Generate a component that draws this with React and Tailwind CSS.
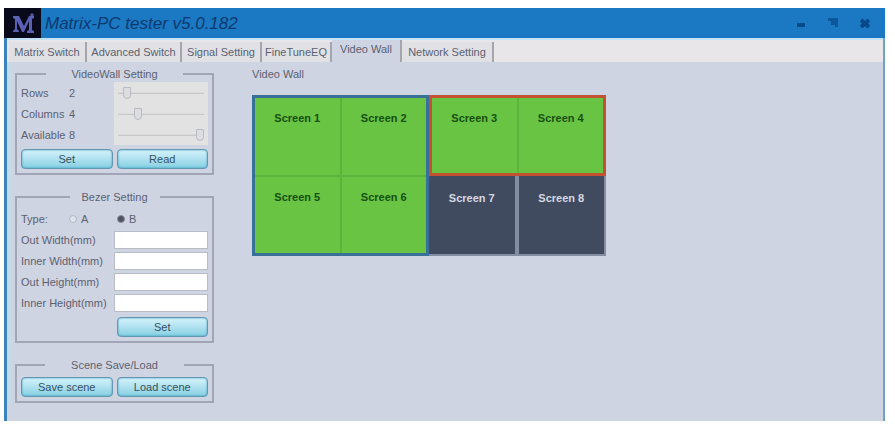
import React, { useState } from "react";

const TABS = [
  { name: "Matrix Switch", width: "w-[78px]" },
  { name: "Advanced Switch", width: "w-[95px]" },
  { name: "Signal Setting", width: "w-20" },
  { name: "FineTuneEQ", width: "w-[70px]" },
  { name: "Video Wall", width: "w-[70px]" },
  { name: "Network Setting", width: "w-[92px]" },
];

const SLIDERS = [
  { id: "rows", label: "Rows", value: 2, max: 16 },
  { id: "columns", label: "Columns", value: 4, max: 16 },
  { id: "available", label: "Available", value: 8, max: 8 },
];

const BEZEL_FIELDS = ["Out Width(mm)", "Inner Width(mm)", "Out Height(mm)", "Inner Height(mm)"];

function AquaButton({ children, className = "" }) {
  return (
    <button
      type="button"
      className={`h-5 rounded-sm border border-[#6496b2] bg-linear-to-b from-[#d3f3fb] via-[#b0e1f0] to-[#84cfe2] text-[11px] leading-none text-[#35505f] shadow-[inset_0_0_2px_#2f91b5] ${className}`}
    >
      {children}
    </button>
  );
}

function Group({ title, legendClass, children }) {
  return (
    <fieldset className="min-w-0 border-2 border-[#a1a5b5] px-1 pb-1">
      <legend className={`mx-auto h-4 text-center text-[11px] leading-4 ${legendClass}`}>
        {title}
      </legend>
      {children}
    </fieldset>
  );
}

function Slider({ id, label, value, max }) {
  const [current, setCurrent] = useState(value);

  return (
    <div className="grid h-[21px] grid-cols-[93px_1fr] items-center">
      <label htmlFor={id} className="flex">
        <span className="w-12">{label}</span>
        <span>{current}</span>
      </label>
      <input
        id={id}
        type="range"
        min="1"
        max={max}
        value={current}
        onChange={(e) => setCurrent(Number(e.target.value))}
        className="h-full w-full appearance-none bg-[#e2e2e3] px-1 [&::-webkit-slider-runnable-track]:h-3 [&::-webkit-slider-runnable-track]:bg-linear-to-b [&::-webkit-slider-runnable-track]:from-transparent [&::-webkit-slider-runnable-track]:from-45% [&::-webkit-slider-runnable-track]:via-[#b5b6ba] [&::-webkit-slider-runnable-track]:via-50% [&::-webkit-slider-runnable-track]:to-transparent [&::-webkit-slider-runnable-track]:to-60% [&::-webkit-slider-thumb]:h-3 [&::-webkit-slider-thumb]:w-2 [&::-webkit-slider-thumb]:appearance-none [&::-webkit-slider-thumb]:rounded-b-sm [&::-webkit-slider-thumb]:border [&::-webkit-slider-thumb]:border-[#b9bbc0] [&::-webkit-slider-thumb]:bg-[#dcdde0]"
      />
    </div>
  );
}

function Screen({ number, idle }) {
  return (
    <div
      className={`flex h-full justify-center text-[11px] leading-4 font-bold ${idle ? "bg-[#414b60] pt-[14px] text-[#d5d9e2]" : "bg-[#68c442] pt-3 text-[#17500f]"}`}
    >
      Screen {number}
    </div>
  );
}

function TitleBar() {
  return (
    <header className="flex h-[30px] items-center bg-[#1b78c2]">
      <svg viewBox="0 0 37 30" className="h-[30px] w-[37px]" aria-hidden="true">
        <rect width="37" height="30" fill="#080a1c" />
        <path
          d="M9 8h6l5 10 5-10h5v2l-2 1v11l2 1v2h-7v-2l2-1v-9l-5 11h-2l-5-11v8l2 2v1H9v-1l2-2V11l-2-1z"
          fill="#5a60b4"
        />
        <path d="M28 5v4M26 7h4" stroke="#686fc0" strokeWidth="1" />
      </svg>
      <h1 className="grow pl-1 text-[17px] leading-none text-[#0b3a70] italic">
        Matrix-PC tester v5.0.182
      </h1>
      <div className="flex pr-1 text-[#06498a]">
        <button type="button" aria-label="Minimize" className="flex h-8 w-8 items-center justify-center">
          <svg viewBox="0 0 10 10" className="size-[10px]">
            <path d="M1 5h8v4H1z" fill="currentColor" />
          </svg>
        </button>
        <button type="button" aria-label="Maximize" className="flex h-8 w-8 items-center justify-center">
          <svg viewBox="0 0 10 10" className="size-[10px]">
            <path d="M0 0h10v9H7V7H3V3H0z" fill="currentColor" opacity="0.7" />
          </svg>
        </button>
        <button type="button" aria-label="Close" className="flex h-8 w-8 items-center justify-center">
          <svg viewBox="0 0 10 10" className="size-[10px]">
            <path d="M1 2l8 7M9 2l-8 7" stroke="currentColor" strokeWidth="4" />
          </svg>
        </button>
      </div>
    </header>
  );
}

function App() {
  const [activeTab, setActiveTab] = useState("Video Wall");
  const [bezelType, setBezelType] = useState("B");

  return (
    <div className="flex min-h-screen flex-col bg-white pt-2 pr-[10px] pb-[7px] pl-1 font-['Liberation_Sans',sans-serif] text-[11px] leading-4 text-[#5b6170]">
      <TitleBar />

      <div className="flex grow flex-col border-r-2 border-l-[3px] border-r-[#6fa3c6] border-l-[#3b83bd] bg-[#cfd4e3]">
        <nav className="flex h-6 items-end border-t-2 border-[#c3e2f5] bg-[#e8e6e8] pl-0.5">
          {TABS.map((tab) => (
            <button
              key={tab.name}
              type="button"
              onClick={() => setActiveTab(tab.name)}
              className={`overflow-hidden text-center text-[11px] whitespace-nowrap ${tab.width} ${
                activeTab === tab.name
                  ? "h-[22px] border-r-2 border-[#a5a6ad] bg-[#cfd4e3] pb-1"
                  : "h-5 border-r-2 border-[#a5a6ad] bg-[#e1e1e5]"
              }`}
            >
              {tab.name}
            </button>
          ))}
        </nav>

        <main className="flex gap-[38px] border-l-4 border-[#c5daeb] pt-1 pl-1">
          <aside className="flex w-[199px] shrink-0 flex-col gap-[14px]">
            <Group title="VideoWall Setting" legendClass="w-[137px]">
              {SLIDERS.map((slider) => (
                <Slider key={slider.id} {...slider} />
              ))}
              <div className="mt-1 grid grid-cols-2 gap-1">
                <AquaButton>Set</AquaButton>
                <AquaButton>Read</AquaButton>
              </div>
            </Group>

            <Group title="Bezer Setting" legendClass="w-[90px]">
              <div className="mt-1 flex h-5 items-center">
                <span className="w-12">Type:</span>
                {["A", "B"].map((type) => (
                  <label key={type} className="flex w-12 items-center gap-1">
                    <input
                      type="radio"
                      name="bezel"
                      checked={bezelType === type}
                      onChange={() => setBezelType(type)}
                      className="size-2 appearance-none rounded-full border border-[#b4b8c4] bg-[#dfe2ea] checked:border-[#8a8f9d] checked:bg-[#4c5260]"
                    />
                    {type}
                  </label>
                ))}
              </div>
              {BEZEL_FIELDS.map((field) => (
                <label key={field} className="grid h-[21px] grid-cols-[93px_1fr] items-center whitespace-nowrap">
                  {field}
                  <input type="text" className="h-[18px] w-full min-w-0 border border-[#b9bcc6] bg-white px-1" />
                </label>
              ))}
              <div className="mt-1 grid grid-cols-2 gap-1">
                <AquaButton className="col-start-2">Set</AquaButton>
              </div>
            </Group>

            <Group title="Scene Save/Load" legendClass="w-[139px]">
              <div className="mt-1 grid grid-cols-2 gap-1">
                <AquaButton>Save scene</AquaButton>
                <AquaButton>Load scene</AquaButton>
              </div>
            </Group>
          </aside>

          <section>
            <h2>Video Wall</h2>
            <div className="mt-[13px] grid h-[161px] w-[354px] grid-cols-2">
              <div className="grid grid-cols-2 grid-rows-2 gap-0.5 border-[3px] border-[#38709a] bg-[#5bb53c]">
                {[1, 2, 5, 6].map((n) => (
                  <Screen key={n} number={n} />
                ))}
              </div>
              <div className="grid grid-rows-2">
                <div className="grid grid-cols-2 gap-0.5 border-[3px] border-[#c4512f] bg-[#5bb53c]">
                  <Screen number={3} />
                  <Screen number={4} />
                </div>
                <div className="grid grid-cols-2 gap-1 border-r-2 border-b-2 border-[#858da0] bg-[#858da0]">
                  <Screen number={7} idle />
                  <Screen number={8} idle />
                </div>
              </div>
            </div>
          </section>
        </main>
      </div>
    </div>
  );
}

export default App;
